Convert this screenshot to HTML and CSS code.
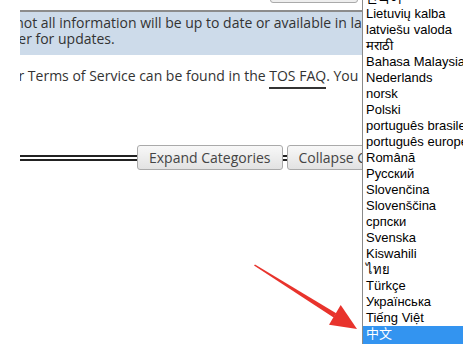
FILE: index.html
```html
<!DOCTYPE html>
<html lang="en">
<head>
    <meta charset="UTF-8">
    <meta name="viewport" content="width=device-width, initial-scale=1.0">
    <title>Language menu</title>
    <link rel="stylesheet" href="styles.css">
</head>
<body>

<div class="page">
    <div class="clip">
        <div class="inner">
            <div class="toolbar"><span class="top-btn"></span></div>
            <div class="notice">
                <p>Note: not all information will be up to date or available in languages other than English.</p>
                <p>Check later for updates.</p>
            </div>
            <p class="tos">Our Terms of Service can be found in the <a href="#">TOS FAQ</a>. You can also read more.</p>
            <div class="cat-bar">
                <span class="rule"></span>
                <button class="btn">Expand Categories</button>
                <span class="rule short"></span>
                <button class="btn">Collapse Categories</button>
            </div>
        </div>
    </div>

    <ul class="lang-list">
        <li>한국어</li>
        <li>Lietuvių kalba</li>
        <li>latviešu valoda</li>
        <li>मराठी</li>
        <li>Bahasa Malaysia</li>
        <li>Nederlands</li>
        <li>norsk</li>
        <li>Polski</li>
        <li>português brasileiro</li>
        <li>português europeu</li>
        <li>Română</li>
        <li>Русский</li>
        <li>Slovenčina</li>
        <li>Slovenščina</li>
        <li>српски</li>
        <li>Svenska</li>
        <li>Kiswahili</li>
        <li>ไทย</li>
        <li>Türkçe</li>
        <li>Українська</li>
        <li>Tiếng Việt</li>
        <li class="selected">中文</li>
    </ul>

    <svg class="arrow" width="463" height="344" viewBox="0 0 463 344">
        <polygon points="254,265.5 255,264.5 336.2,313.3 333.6,317.5" fill="#e8332c"/>
        <polygon points="357,329 329,324.7 340.7,305.1" fill="#e8332c"/>
    </svg>
</div>

</body>
</html>
```

FILE: styles.css
```css
body{
    margin:0;
    background:#fff;
    font-family: 'Open Sans', 'DejaVu Sans', sans-serif;
    color:#333;
}
.page{
    position:relative;
    width:463px;
    height:344px;
    overflow:hidden;
}
.clip{
    margin-left:20px;
    overflow:hidden;
}
.inner{
    width:900px;
}
.toolbar{
    height:3px;
    position:relative;
}
.top-btn{
    position:absolute;
    left:250px;
    top:-20px;
    width:86px;
    height:21px;
    border:1px solid #aaa;
    border-radius:3px;
    background:#eee;
}
.notice{
    margin-top:7px;
    border-top:2px solid #8c8c8c;
    background:#cddbea;
    height:45px;
    padding-top:3px;
    box-sizing:border-box;
    margin-left:-44px;
}
.notice p{
    margin:0;
    font-size:14px;
    line-height:16px;
}
.notice p + p{
    margin-left:-17px;
}
.tos{
    margin:11px 0 0 -21px;
    font-size:14px;
    line-height:20px;
}
.tos a{
    color:#333;
    text-decoration:none;
    border-bottom:2px solid #333;
    padding-bottom:2px;
}
.cat-bar{
    display:flex;
    align-items:center;
    margin-top:59px;
}
.rule{
    width:117px;
    height:2px;
    border-top:2px solid #222;
    border-bottom:2px solid #222;
}
.rule.short{
    width:4px;
}
.btn{
    font-family: 'Open Sans', 'DejaVu Sans', sans-serif;
    font-size:14px;
    color:#444;
    height:25px;
    padding:0 11px;
    border:1px solid #aaa;
    border-radius:3px;
    background:linear-gradient(#f8f8f8, #e2e2e2);
    white-space:nowrap;
}
.lang-list{
    position:absolute;
    left:362px;
    top:-10px;
    width:120px;
    margin:0;
    padding:0;
    list-style:none;
    background:#fff;
    border-left:1px solid #8a8a8a;
    font-family: 'Liberation Sans', 'Noto Sans CJK SC', sans-serif;
    font-size:13px;
    color:#000;
}
.lang-list li{
    height:16px;
    line-height:16px;
    padding-left:3px;
    white-space:nowrap;
}
.lang-list li.selected{
    background:#3394f0;
    color:#fff;
    height:20px;
}
.arrow{
    position:absolute;
    left:0;
    top:0;
    pointer-events:none;
}
```
